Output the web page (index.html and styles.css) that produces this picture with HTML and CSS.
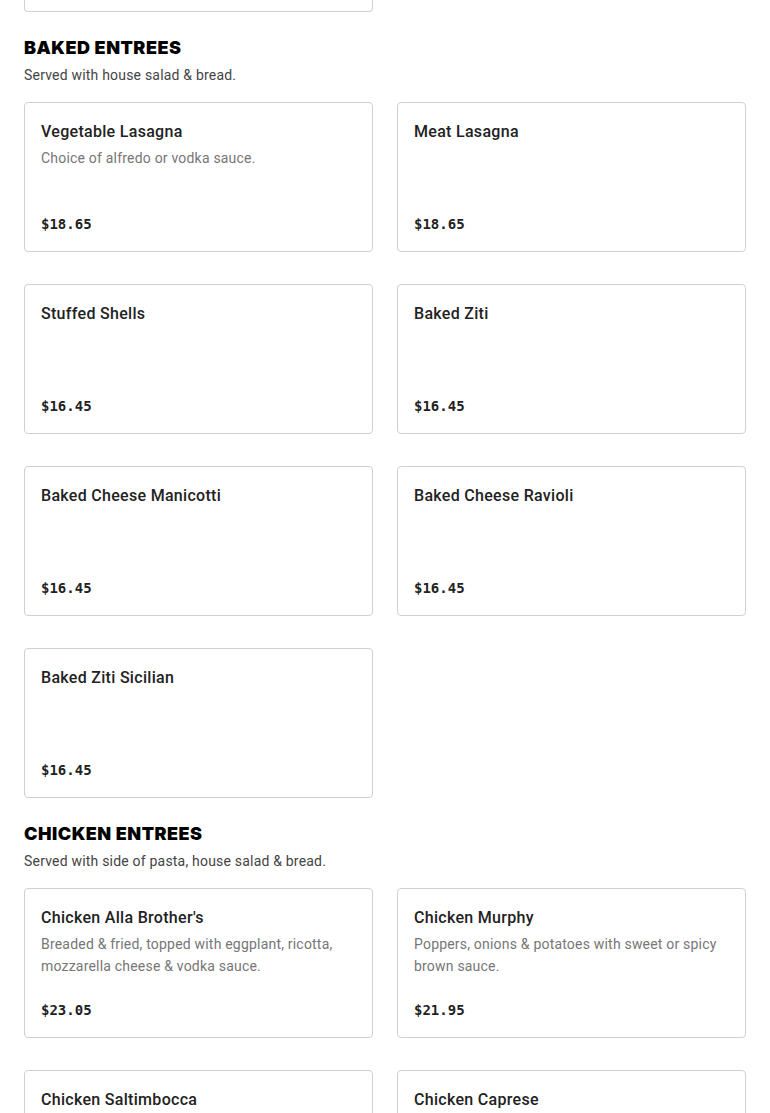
FILE: index.html
```html
<!DOCTYPE html>
<html>
<head>
<meta charset="utf-8">
<link rel="stylesheet" href="styles.css">
</head>
<body>
<div class="page">
  <div class="card-tail"></div>

  <section class="section">
    <h2 class="section-title">BAKED ENTREES</h2>
    <p class="section-sub">Served with house salad &amp; bread.</p>
    <div class="grid">
      <div class="card">
        <div class="item-name">Vegetable Lasagna</div>
        <div class="item-desc">Choice of alfredo or vodka sauce.</div>
        <div class="item-price">$18.65</div>
      </div>
      <div class="card">
        <div class="item-name">Meat Lasagna</div>
        <div class="item-price">$18.65</div>
      </div>
      <div class="card">
        <div class="item-name">Stuffed Shells</div>
        <div class="item-price">$16.45</div>
      </div>
      <div class="card">
        <div class="item-name">Baked Ziti</div>
        <div class="item-price">$16.45</div>
      </div>
      <div class="card">
        <div class="item-name">Baked Cheese Manicotti</div>
        <div class="item-price">$16.45</div>
      </div>
      <div class="card">
        <div class="item-name">Baked Cheese Ravioli</div>
        <div class="item-price">$16.45</div>
      </div>
      <div class="card">
        <div class="item-name">Baked Ziti Sicilian</div>
        <div class="item-price">$16.45</div>
      </div>
    </div>
  </section>

  <section class="section">
    <h2 class="section-title">CHICKEN ENTREES</h2>
    <p class="section-sub">Served with side of pasta, house salad &amp; bread.</p>
    <div class="grid">
      <div class="card">
        <div class="item-name">Chicken Alla Brother's</div>
        <div class="item-desc">Breaded &amp; fried, topped with eggplant, ricotta, mozzarella cheese &amp; vodka sauce.</div>
        <div class="item-price">$23.05</div>
      </div>
      <div class="card">
        <div class="item-name">Chicken Murphy</div>
        <div class="item-desc">Poppers, onions &amp; potatoes with sweet or spicy brown sauce.</div>
        <div class="item-price">$21.95</div>
      </div>
      <div class="card">
        <div class="item-name">Chicken Saltimbocca</div>
        <div class="item-price">$23.05</div>
      </div>
      <div class="card">
        <div class="item-name">Chicken Caprese</div>
        <div class="item-price">$23.05</div>
      </div>
    </div>
  </section>
</div>
</body>
</html>
```

FILE: styles.css
```css
* { box-sizing: border-box; }

body {
  margin: 0;
  background: #fff;
  font-family: "Roboto", "Inter", "Liberation Sans", sans-serif;
  color: #222;
}

.page {
  padding: 0 24px;
}

.card-tail {
  width: 349px;
  height: 12px;
  border: 1px solid #d0d0d0;
  border-top: none;
  border-radius: 0 0 4px 4px;
}

.section {
  margin-top: 24px;
}

.section-title {
  margin: 0;
  font-family: "Inter", "Liberation Sans", sans-serif;
  font-size: 18px;
  line-height: 24px;
  font-weight: 900;
  color: #000;
  letter-spacing: 0.5px;
}

.section-sub {
  margin: 4px 0 16px;
  font-size: 14px;
  line-height: 22px;
  color: #444;
  letter-spacing: 0.2px;
}

.grid {
  display: grid;
  grid-template-columns: 1fr 1fr;
  column-gap: 24px;
  row-gap: 32px;
}

.card {
  height: 150px;
  border: 1px solid #d0d0d0;
  border-radius: 4px;
  padding: 16px;
  display: flex;
  flex-direction: column;
}

.item-name {
  padding-top: 1px;
  font-size: 16px;
  line-height: 24px;
  font-weight: 500;
  color: #222;
  letter-spacing: 0.3px;
}

.item-desc {
  margin-top: 3px;
  font-size: 14px;
  line-height: 22px;
  color: #767676;
  letter-spacing: 0.2px;
}

.item-price {
  margin-top: auto;
  padding-bottom: 1px;
  font-family: "DejaVu Sans Mono", "Liberation Mono", monospace;
  font-weight: 700;
  font-size: 14px;
  line-height: 20px;
  color: #222;
}
```
